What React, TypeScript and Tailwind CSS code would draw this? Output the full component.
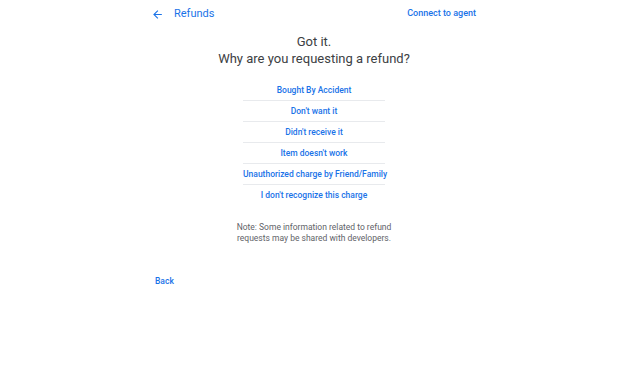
import { useState } from "react";

const reasons = [
  "Bought By Accident",
  "Don't want it",
  "Didn't receive it",
  "Item doesn't work",
  "Unauthorized charge by Friend/Family",
  "I don't recognize this charge",
];

const App = () => {
  const [picked, setPicked] = useState<string | null>(null);

  return (
    <div className="min-h-[380px] w-[640px] bg-white font-['Roboto',sans-serif]">
      <div className="ml-[150px] w-[328px] flex flex-col">
        {/* header */}
        <div className="h-[27px] pt-[1px] flex items-center justify-between">
          <div className="flex items-center gap-[10px]">
            <svg width="13" height="13" viewBox="0 0 24 24" className="ml-[1px]">
              <path
                d="M20 11H7.83l5.59-5.59L12 4l-8 8 8 8 1.41-1.41L7.83 13H20v-2z"
                fill="#1a73e8"
              />
            </svg>
            <span className="text-[11px] text-[#1a73e8]">Refunds</span>
          </div>
          <button className="text-[9px] font-medium text-[#1a73e8] mr-[2px]">
            Connect to agent
          </button>
        </div>

        {/* title */}
        <div className="mt-[6px] text-center text-[13px] leading-[17px] text-[#3c4043]">
          <div>Got it.</div>
          <div>Why are you requesting a refund?</div>
        </div>

        {/* reasons */}
        <div className="mt-[13px] self-center w-[142px] flex flex-col">
          {reasons.map((r, i) => (
            <button
              key={r}
              onClick={() => setPicked(r)}
              className={
                "h-[21px] text-[8.5px] font-medium whitespace-nowrap text-[#1a73e8] text-center " +
                (i < reasons.length - 1 ? "border-b border-[#e8eaed]" : "") +
                (picked === r ? " bg-[#e8f0fe]" : "")
              }
            >
              {r}
            </button>
          ))}
        </div>

        {/* note */}
        <p className="mt-[16px] text-center text-[8.5px] leading-[11px] text-[#5f6368]">
          Note: Some information related to refund
          <br />
          requests may be shared with developers.
        </p>

        <button className="mt-[31px] ml-[5px] self-start text-[8.5px] font-medium text-[#1a73e8]">
          Back
        </button>
      </div>
    </div>
  );
};

export default App;
